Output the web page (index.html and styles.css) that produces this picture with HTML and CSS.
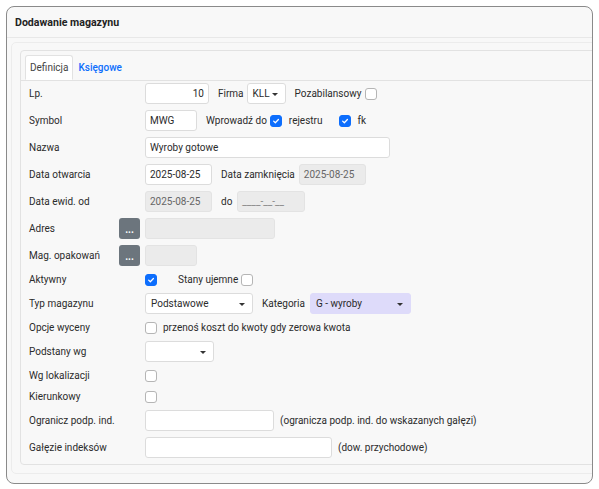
FILE: index.html
```html
<!DOCTYPE html>
<html lang="pl">
<head>
<meta charset="utf-8">
<title>Dodawanie magazynu</title>
<link rel="stylesheet" href="styles.css">
</head>
<body>
<div class="dialog">
  <div class="dialog-header">Dodawanie magazynu</div>
  <div class="dialog-body">
    <div class="outer-card">
      <div class="inner-card">
        <div class="tabs">
          <div class="tab active">Definicja</div>
          <div class="tab link">Księgowe</div>
        </div>
        <div class="form">
          <div class="row">
            <div class="label">Lp.</div>
            <div class="input w64 right">10</div>
            <span class="txt ml9">Firma</span>
            <div class="select w39 ml3">KLL</div>
            <span class="txt ml9">Pozabilansowy</span>
            <span class="cb ml4"></span>
          </div>
          <div class="row">
            <div class="label">Symbol</div>
            <div class="input w52">MWG</div>
            <span class="txt ml9">Wprowadź do</span>
            <span class="cb checked ml3"><svg viewBox="0 0 12 12"><path d="M3.2 6.2 L5.2 8.1 L8.9 4.2" fill="none" stroke="#fff" stroke-width="1.5" stroke-linecap="round" stroke-linejoin="round"/></svg></span>
            <span class="txt ml7">rejestru</span>
            <span class="cb checked ml16"><svg viewBox="0 0 12 12"><path d="M3.2 6.2 L5.2 8.1 L8.9 4.2" fill="none" stroke="#fff" stroke-width="1.5" stroke-linecap="round" stroke-linejoin="round"/></svg></span>
            <span class="txt ml7">fk</span>
          </div>
          <div class="row">
            <div class="label">Nazwa</div>
            <div class="input w245">Wyroby gotowe</div>
          </div>
          <div class="row">
            <div class="label">Data otwarcia</div>
            <div class="input w67">2025-08-25</div>
            <span class="txt ml9">Data zamknięcia</span>
            <div class="input disabled w67 ml4">2025-08-25</div>
          </div>
          <div class="row">
            <div class="label">Data ewid. od</div>
            <div class="input disabled w67">2025-08-25</div>
            <span class="txt ml9">do</span>
            <div class="input disabled w68 ml5 placeholder">____-__-__</div>
          </div>
          <div class="row">
            <div class="label short">Adres</div>
            <div class="dots-btn">...</div>
            <div class="input disabled w130"></div>
          </div>
          <div class="row">
            <div class="label short">Mag. opakowań</div>
            <div class="dots-btn">...</div>
            <div class="input disabled w52"></div>
          </div>
          <div class="row cbrow">
            <div class="label">Aktywny</div>
            <span class="cb checked"><svg viewBox="0 0 12 12"><path d="M3.2 6.2 L5.2 8.1 L8.9 4.2" fill="none" stroke="#fff" stroke-width="1.5" stroke-linecap="round" stroke-linejoin="round"/></svg></span>
            <span class="txt ml21">Stany ujemne</span>
            <span class="cb ml3"></span>
          </div>
          <div class="row">
            <div class="label">Typ magazynu</div>
            <div class="select w108">Podstawowe</div>
            <span class="txt ml9">Kategoria</span>
            <div class="select lavender w101 ml5">G - wyroby</div>
          </div>
          <div class="row cbrow">
            <div class="label">Opcje wyceny</div>
            <span class="cb"></span>
            <span class="txt ml6">przenoś koszt do kwoty gdy zerowa kwota</span>
          </div>
          <div class="row">
            <div class="label">Podstany wg</div>
            <div class="select w69"></div>
          </div>
          <div class="row cbrow">
            <div class="label">Wg lokalizacji</div>
            <span class="cb"></span>
          </div>
          <div class="row cbrow">
            <div class="label">Kierunkowy</div>
            <span class="cb"></span>
          </div>
          <div class="row">
            <div class="label">Ogranicz podp. ind.</div>
            <div class="input w129"></div>
            <span class="txt ml6">(ogranicza podp. ind. do wskazanych gałęzi)</span>
          </div>
          <div class="row">
            <div class="label">Gałęzie indeksów</div>
            <div class="input w187"></div>
            <span class="txt ml6">(dow. przychodowe)</span>
          </div>
        </div>
      </div>
    </div>
  </div>
</div>
</body>
</html>
```
FILE: styles.css
```css
* { box-sizing: border-box; }
html, body { margin: 0; padding: 0; background: #fff; }
body {
  font-family: Roboto, "Liberation Sans", sans-serif;
  font-size: 10px;
  color: #2b2b2b;
  padding: 6px 6px 0 6px;
}
.dialog {
  width: 587px;
  height: 478px;
  border: 1px solid #8a8a8a;
  border-radius: 8px;
  background: #f8f8f8;
  overflow: hidden;
}
.dialog-header {
  height: 31px;
  padding: 1px 8px 0 8px;
  display: flex;
  align-items: center;
  font-size: 10.6px;
  font-weight: 700;
  color: #222;
  border-bottom: 1px solid #e8e8e8;
}
.dialog-body {
  padding: 4px 0 0 4px;
}
.outer-card {
  margin-right: -30px;
  border: 1px solid #ececec;
  border-radius: 5px;
  padding: 7px 8px 8px 8px;
}
.inner-card {
  border: 1px solid #e2e2e2;
  border-radius: 4px;
  padding-bottom: 6px;
}
.tabs {
  display: flex;
  padding: 4px 0 0 4px;
  border-bottom: 1px solid #e2e2e2;
  height: 30px;
}
.tab {
  height: 25px;
  padding: 0 4px;
  display: flex;
  align-items: center;
  margin-bottom: -1px;
  border: 1px solid transparent;
  border-radius: 3px 3px 0 0;
}
.tab.active {
  background: #fff;
  border-color: #e2e2e2;
  border-bottom-color: #fff;
  color: #444;
}
.tab.link {
  color: #0d6efd;
  font-weight: 500;
}
.form { padding: 2px 0 0 8px; }
.row {
  display: flex;
  align-items: center;
  height: 21px;
  margin-bottom: 6px;
}
.row.cbrow { height: 15px; }
.row:last-child { margin-bottom: 0; }
.label {
  width: 116px;
  flex: none;
  white-space: nowrap;
}
.label.short { width: 90px; }
.dots-btn {
  width: 21px;
  height: 21px;
  margin-right: 5px;
  background: #6c757d;
  color: #fff;
  border-radius: 3px;
  font-size: 10px;
  font-weight: 700;
  display: flex;
  align-items: center;
  justify-content: center;
  line-height: 1;
  padding-top: 3px;
}
.input, .select {
  height: 21px;
  border: 1px solid #dcdcdc;
  border-radius: 3px;
  background: #fff;
  padding: 0 4px;
  display: flex;
  align-items: center;
  white-space: nowrap;
  flex: none;
}
.input.right { justify-content: flex-end; }
.input.disabled {
  background: #ebebeb;
  border-color: #e3e3e3;
  color: #666;
}
.input.placeholder { color: #888; }
.select {
  position: relative;
  padding-left: 5px;
}
.select::after {
  content: "";
  position: absolute;
  right: 7px;
  top: 9px;
  border-left: 3px solid transparent;
  border-right: 3px solid transparent;
  border-top: 3px solid #333;
}
.select.lavender {
  background: #dedbfa;
  border-color: #dedbfa;
}
.cb {
  width: 12px;
  height: 12px;
  flex: none;
  border: 1px solid #b5b5b5;
  border-radius: 3px;
  background: #fff;
  display: inline-flex;
}
.cb.checked {
  background: #0d6efd;
  border-color: #0d6efd;
}
.cb svg { width: 10px; height: 10px; }
.txt { white-space: nowrap; }
.w39 { width: 39px; }
.w52 { width: 52px; }
.w64 { width: 64px; }
.w67 { width: 67px; }
.w68 { width: 68px; }
.w69 { width: 69px; }
.w101 { width: 101px; }
.w108 { width: 108px; }
.w129 { width: 129px; }
.w130 { width: 130px; }
.w187 { width: 187px; }
.w245 { width: 245px; }
.ml3 { margin-left: 3px; }
.ml4 { margin-left: 4px; }
.ml5 { margin-left: 5px; }
.ml6 { margin-left: 6px; }
.ml7 { margin-left: 7px; }
.ml9 { margin-left: 9px; }
.ml16 { margin-left: 16px; }
.ml21 { margin-left: 21px; }
```
